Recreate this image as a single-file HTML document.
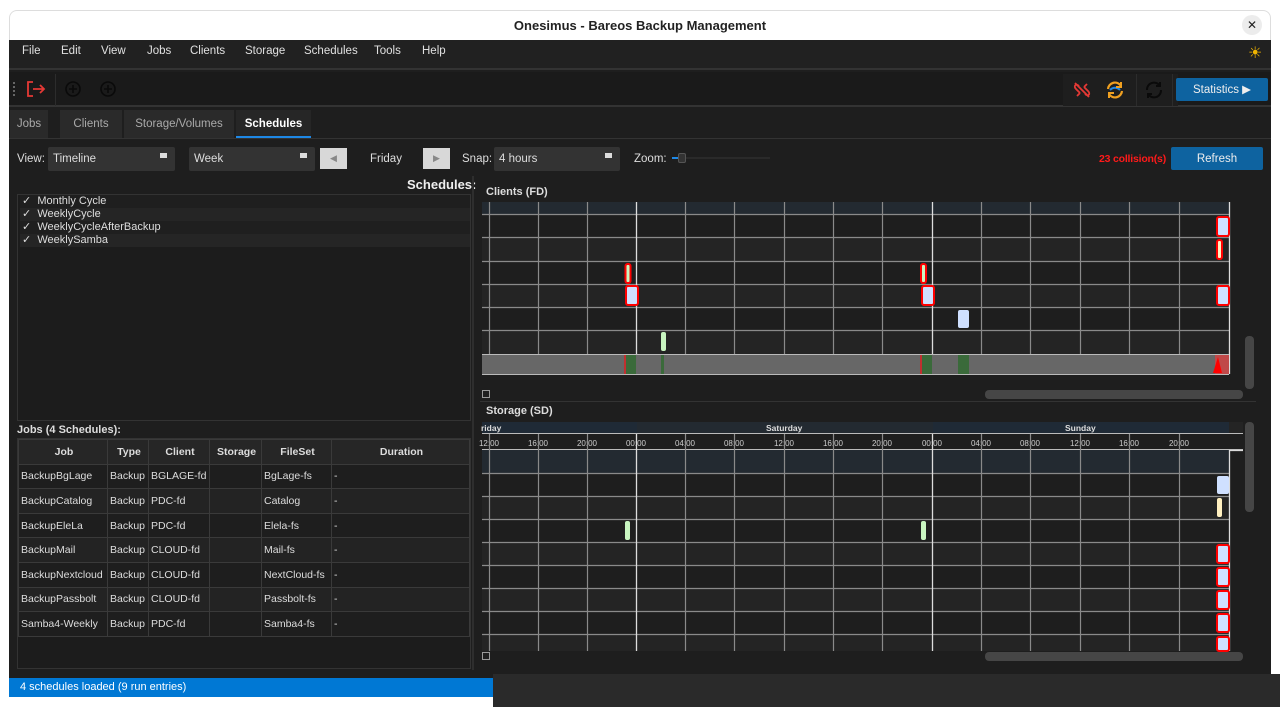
<!DOCTYPE html>
<html><head><meta charset="utf-8"><style>
*{margin:0;padding:0;box-sizing:border-box}
body{width:1280px;height:707px;background:#fff;position:relative;overflow:hidden;font-family:"Liberation Sans","DejaVu Sans",sans-serif;font-size:11px;color:#ddd}
.a{position:absolute}
.title{left:9px;top:10px;width:1262px;height:30px;background:#fff;color:#222;font-weight:bold;font-size:13px;text-align:center;line-height:30px;border-radius:8px 8px 0 0;border:1px solid #ddd;border-bottom:none}
.win{left:9px;top:40px;width:1262px;height:638px;background:#1e1e1e}
.menu{left:9px;top:40px;width:1262px;height:30px;background:#212121;border-bottom:2px solid #333}
.menu span{position:absolute;top:5px;color:#e0e0e0;font-size:11.5px}
.tb{left:9px;top:72px;width:1262px;height:35px;background:#1a1a1a;border-bottom:2px solid #333}
.tab{top:110px;height:28px;background:#2a2a2a;color:#aaa;text-align:center;line-height:29px;font-size:11.5px}
.combo{height:24px;background:#333;border-radius:2px;color:#ddd;line-height:24px;padding-left:5px;font-size:11.5px}
.combo i{position:absolute;right:8px;top:6px;width:7px;height:5px;background:#ddd}
.btn{background:#0e63a0;color:#eee;text-align:center;border-radius:2px;font-size:11.5px}
table{border-collapse:collapse;table-layout:fixed}
td,th{border:1px solid #3a3a3a;height:24.6px;padding-left:2px;text-align:left;white-space:nowrap;overflow:hidden;font-weight:normal;color:#ddd;font-size:10.5px}
th{text-align:center;font-weight:bold;background:#262626}
tr:nth-child(odd) td{background:#232323}
tr:nth-child(even) td{background:#1e1e1e}
</style></head><body>
<div class="a title">Onesimus - Bareos Backup Management</div>
<div class="a" style="left:1242px;top:15px;width:20px;height:20px;border-radius:10px;background:#ececec;color:#222;font-weight:bold;text-align:center;line-height:20px;font-size:12px">✕</div>
<div class="a win"></div>
<div class="a menu">
<span style="left:13px">File</span><span style="left:52px">Edit</span><span style="left:92px">View</span><span style="left:138px">Jobs</span><span style="left:181px">Clients</span><span style="left:236px">Storage</span><span style="left:295px">Schedules</span><span style="left:365px">Tools</span><span style="left:413px">Help</span>
<span style="left:1239px;top:3px;color:#f0b400;font-size:16px">☀</span>
</div>
<div class="a tb"></div>
<div class="a" style="left:13px;top:82px;width:3px;height:14px;border-left:2px dotted #666"></div>
<svg class="a" style="left:25px;top:79px" width="22" height="20" viewBox="0 0 22 20"><path d="M8 3H3v14h5M8 10h11M15 6l4 4-4 4" fill="none" stroke="#e53935" stroke-width="1.8"/></svg>
<div class="a" style="left:55px;top:74px;width:1px;height:32px;background:#2c2c2c"></div>
<svg class="a" style="left:64px;top:80px" width="18" height="18"><circle cx="9" cy="9" r="7" fill="none" stroke="#0a0a0a" stroke-width="1.6"/><path d="M9 5v8M5 9h8" stroke="#0a0a0a" stroke-width="1.6"/></svg>
<svg class="a" style="left:99px;top:80px" width="18" height="18"><circle cx="9" cy="9" r="7" fill="none" stroke="#0a0a0a" stroke-width="1.6"/><path d="M9 5v8M5 9h8" stroke="#0a0a0a" stroke-width="1.6"/></svg>
<div class="a" style="left:1063px;top:74px;width:115px;height:32px;background:#1e1e1e"></div>
<svg class="a" style="left:1071px;top:79px" width="22" height="22"><path d="M4 4l14 14M8 7c-3-3-6 0-3 3l4 4M14 15c3 3 6 0 3-3l-4-4M9 14l-3 3M13 8l3-3" fill="none" stroke="#e53935" stroke-width="1.8"/></svg>
<svg class="a" style="left:1104px;top:79px" width="22" height="22"><path d="M4 10a7 7 0 0 1 13-3M18 12a7 7 0 0 1-13 3" fill="none" stroke="#f0a020" stroke-width="2.2"/><path d="M6 11c3-3 7-3 10 0" fill="none" stroke="#1e88e5" stroke-width="2"/><path d="M17 3v5h-5M5 19v-5h5" fill="none" stroke="#f0a020" stroke-width="2"/></svg>
<div class="a" style="left:1136px;top:74px;width:1px;height:32px;background:#2c2c2c"></div>
<svg class="a" style="left:1143px;top:79px" width="22" height="22"><path d="M4 11a7 7 0 0 1 13-4M18 11a7 7 0 0 1-13 4M17 3v4h-4M5 19v-4h4" fill="none" stroke="#0a0a0a" stroke-width="2"/></svg>
<div class="a" style="left:1172px;top:74px;width:1px;height:32px;background:#2c2c2c"></div>
<div class="a btn" style="left:1176px;top:78px;width:92px;height:23px;line-height:24px">Statistics ▶</div>

<div class="a tab" style="left:10px;width:38px">Jobs</div>
<div class="a tab" style="left:60px;width:62px">Clients</div>
<div class="a tab" style="left:124px;width:110px">Storage/Volumes</div>
<div class="a tab" style="left:236px;width:75px;color:#fff;font-weight:bold;border-bottom:2px solid #1e88e5;background:#262626">Schedules</div>
<div class="a" style="left:9px;top:138px;width:1262px;height:1px;background:#333"></div>

<div class="a" style="left:17px;top:153px;font-size:11.5px">View:</div>
<div class="a combo" style="left:48px;top:147px;width:127px">Timeline<i></i></div>
<div class="a combo" style="left:189px;top:147px;width:126px">Week<i></i></div>
<div class="a" style="left:320px;top:148px;width:27px;height:21px;background:#d8d8d8;color:#888;text-align:center;line-height:21px;font-size:9px">◀</div>
<div class="a" style="left:370px;top:153px;font-size:11.5px">Friday</div>
<div class="a" style="left:423px;top:148px;width:27px;height:21px;background:#d8d8d8;color:#888;text-align:center;line-height:21px;font-size:9px">▶</div>
<div class="a" style="left:462px;top:153px;font-size:11.5px">Snap:</div>
<div class="a combo" style="left:494px;top:147px;width:126px">4 hours<i></i></div>
<div class="a" style="left:634px;top:153px;font-size:11.5px">Zoom:</div>
<div class="a" style="left:672px;top:157px;width:98px;height:2px;background:#2a2a2a"></div>
<div class="a" style="left:672px;top:157px;width:8px;height:2px;background:#1e88e5"></div>
<div class="a" style="left:678px;top:153px;width:8px;height:10px;background:#333;border:1px solid #555;border-radius:2px"></div>
<div class="a" style="right:114px;top:153px;color:#ff1a1a;font-weight:bold;font-size:10.5px;letter-spacing:-0.2px">23 collision(s)</div>
<div class="a btn" style="left:1171px;top:147px;width:92px;height:23px;line-height:24px">Refresh</div>

<div class="a" style="left:407px;top:177px;font-weight:bold;font-size:13px;color:#eee">Schedules:</div>
<div class="a" style="left:17px;top:194px;width:454px;height:227px;background:#1c1c1c;border:1px solid #333"></div>
<div class="a" style="left:20px;top:195px;width:450px;height:13px;background:#1f1f1f"></div>
<div class="a" style="left:20px;top:208px;width:450px;height:13px;background:#252525"></div>
<div class="a" style="left:20px;top:221px;width:450px;height:13px;background:#1f1f1f"></div>
<div class="a" style="left:20px;top:234px;width:450px;height:13px;background:#252525"></div>
<div class="a" style="left:22px;top:195px;line-height:13px;font-size:11px">✓&nbsp; Monthly Cycle<br>✓&nbsp; WeeklyCycle<br>✓&nbsp; WeeklyCycleAfterBackup<br>✓&nbsp; WeeklySamba</div>
<div class="a" style="left:17px;top:424px;font-weight:bold">Jobs (4 Schedules):</div>
<div class="a" style="left:17px;top:438px;width:454px;height:231px;background:#1c1c1c;border:1px solid #333"></div>
<table class="a" style="left:18px;top:439px;width:452px">
<colgroup><col style="width:89px"><col style="width:41px"><col style="width:61px"><col style="width:52px"><col style="width:70px"><col></colgroup>
<tr><th>Job</th><th>Type</th><th>Client</th><th>Storage</th><th>FileSet</th><th>Duration</th></tr>
<tr><td>BackupBgLage</td><td>Backup</td><td>BGLAGE-fd</td><td></td><td>BgLage-fs</td><td>-</td></tr>
<tr><td>BackupCatalog</td><td>Backup</td><td>PDC-fd</td><td></td><td>Catalog</td><td>-</td></tr>
<tr><td>BackupEleLa</td><td>Backup</td><td>PDC-fd</td><td></td><td>Elela-fs</td><td>-</td></tr>
<tr><td>BackupMail</td><td>Backup</td><td>CLOUD-fd</td><td></td><td>Mail-fs</td><td>-</td></tr>
<tr><td>BackupNextcloud</td><td>Backup</td><td>CLOUD-fd</td><td></td><td>NextCloud-fs</td><td>-</td></tr>
<tr><td>BackupPassbolt</td><td>Backup</td><td>CLOUD-fd</td><td></td><td>Passbolt-fs</td><td>-</td></tr>
<tr><td>Samba4-Weekly</td><td>Backup</td><td>PDC-fd</td><td></td><td>Samba4-fs</td><td>-</td></tr>
</table>
<div class="a" style="left:472px;top:176px;width:2px;height:494px;background:#2e2e2e"></div>

<svg class="a" style="left:0;top:0" width="1280" height="707">
<g font-family="Liberation Sans, sans-serif">
<text x="486" y="195" font-size="11" font-weight="bold" fill="#ddd">Clients (FD)</text>
<rect x="482" y="202" width="747" height="12" fill="#232a31"/>
<rect x="482" y="214" width="747" height="23" fill="#1e1e1e"/>
<rect x="482" y="237" width="747" height="24" fill="#242424"/>
<rect x="482" y="261" width="747" height="23" fill="#1e1e1e"/>
<rect x="482" y="284" width="747" height="23" fill="#242424"/>
<rect x="482" y="307" width="747" height="23" fill="#1e1e1e"/>
<rect x="482" y="330" width="747" height="24" fill="#242424"/>
<g stroke="#8a8a8a" stroke-width="1.2">
<path d="M482 214.5H1229M482 237.5H1229M482 261.5H1229M482 284.5H1229M482 307.5H1229M482 330.5H1229"/>
<path d="M489.5 202V354M538.5 202V354M587.5 202V354M685.5 202V354M734.5 202V354M784.5 202V354M833.5 202V354M882.5 202V354M981.5 202V354M1030.5 202V354M1080.5 202V354M1129.5 202V354M1179.5 202V354"/>
</g>
<path d="M636.5 202V354M932.5 202V354M1229.5 202V374" stroke="#ddd" stroke-width="1.3"/>
<rect x="482" y="355" width="747" height="19" fill="#676767"/>
<path d="M482 354.5H1229M482 374.5H1229" stroke="#bbb"/>
<rect x="624" y="355" width="2" height="19" fill="#c03030"/><rect x="626" y="355" width="10" height="19" fill="#3a6a3a"/>
<rect x="661" y="355" width="3" height="19" fill="#3a6a3a"/>
<rect x="920" y="355" width="2" height="19" fill="#c03030"/><rect x="922" y="355" width="10" height="19" fill="#3a6a3a"/>
<rect x="958" y="355" width="11" height="19" fill="#3a6a3a"/>
<rect x="1215" y="355" width="14" height="19" fill="#c04848"/>
<path d="M1213 373L1218 357L1222 373Z" fill="#f00"/>
<g stroke="#f00" stroke-width="2">
<rect x="625.5" y="264" width="5" height="19" rx="2" fill="#c8f5c0"/>
<rect x="626" y="286" width="12" height="19" rx="2" fill="#cfe0ff"/>
<rect x="921" y="264" width="5" height="19" rx="2" fill="#c8f5c0"/>
<rect x="922" y="286" width="12" height="19" rx="2" fill="#cfe0ff"/>
<rect x="1217" y="217" width="12" height="19" rx="2" fill="#cfe0ff"/>
<rect x="1217" y="240" width="5" height="19" rx="2" fill="#fff0c0"/>
<rect x="1217" y="286" width="12" height="19" rx="2" fill="#cfe0ff"/>
</g>
<rect x="661" y="332" width="5" height="19" rx="2" fill="#c8f5c0"/>
<rect x="958" y="310" width="11" height="18" rx="2" fill="#cfe0ff"/>
<rect x="482.5" y="390.5" width="7" height="7" fill="none" stroke="#999"/>
<rect x="985" y="390" width="258" height="9" rx="4" fill="#464646"/>
<rect x="1245" y="336" width="9" height="53" rx="4" fill="#464646"/>
<path d="M480 401.5H1256" stroke="#333"/>
<text x="486" y="414" font-size="11" font-weight="bold" fill="#ddd">Storage (SD)</text>
<rect x="482" y="422" width="155" height="11" fill="#1f2a36"/>
<rect x="637" y="422" width="296" height="11" fill="#232a31"/>
<rect x="933" y="422" width="296" height="11" fill="#1f2a36"/>
<rect x="1229" y="422" width="14" height="11" fill="#242424"/>
<g font-size="8.5" font-weight="bold" fill="#ddd"><text x="481" y="431">riday</text><text x="766" y="431">Saturday</text><text x="1065" y="431">Sunday</text></g>
<path d="M482 433.5H1243M482 449.5H1243" stroke="#bbb"/>
<rect x="482" y="434" width="761" height="15" fill="#1e1e1e"/>
<g font-size="8" fill="#ccc" text-anchor="middle">
<text x="489" y="446">12:00</text><text x="538" y="446">16:00</text><text x="587" y="446">20:00</text><text x="636" y="446">00:00</text><text x="685" y="446">04:00</text><text x="734" y="446">08:00</text><text x="784" y="446">12:00</text><text x="833" y="446">16:00</text><text x="882" y="446">20:00</text><text x="932" y="446">00:00</text><text x="981" y="446">04:00</text><text x="1030" y="446">08:00</text><text x="1080" y="446">12:00</text><text x="1129" y="446">16:00</text><text x="1179" y="446">20:00</text></g>
<rect x="482" y="450" width="747" height="23" fill="#232a31"/>
<rect x="482" y="473" width="747" height="23" fill="#1e1e1e"/>
<rect x="482" y="496" width="747" height="23" fill="#242424"/>
<rect x="482" y="519" width="747" height="23" fill="#1e1e1e"/>
<rect x="482" y="542" width="747" height="23" fill="#242424"/>
<rect x="482" y="565" width="747" height="23" fill="#1e1e1e"/>
<rect x="482" y="588" width="747" height="23" fill="#242424"/>
<rect x="482" y="611" width="747" height="23" fill="#1e1e1e"/>
<rect x="482" y="634" width="747" height="17" fill="#242424"/>
<g stroke="#8a8a8a" stroke-width="1.2">
<path d="M482 473.5H1229M482 496.5H1229M482 519.5H1229M482 542.5H1229M482 565.5H1229M482 588.5H1229M482 611.5H1229M482 634.5H1229"/>
<path d="M489.5 434V651M538.5 434V651M587.5 434V651M685.5 434V651M734.5 434V651M784.5 434V651M833.5 434V651M882.5 434V651M981.5 434V651M1030.5 434V651M1080.5 434V651M1129.5 434V651M1179.5 434V651"/>
</g>
<path d="M636.5 434V651M932.5 434V651M1229.5 450V651M1229 450.5H1243" stroke="#ddd" stroke-width="1.3"/>
<rect x="1217" y="476" width="12" height="18" rx="2" fill="#cfe0ff"/>
<rect x="1217" y="498" width="5" height="19" rx="2" fill="#fff0c0"/>
<rect x="625" y="521" width="5" height="19" rx="2" fill="#c8f5c0"/>
<rect x="921" y="521" width="5" height="19" rx="2" fill="#c8f5c0"/>
<g stroke="#f00" stroke-width="2" fill="#cfe0ff">
<rect x="1217" y="545" width="12" height="18" rx="2"/><rect x="1217" y="568" width="12" height="18" rx="2"/><rect x="1217" y="591" width="12" height="18" rx="2"/><rect x="1217" y="614" width="12" height="18" rx="2"/><rect x="1217" y="637" width="12" height="14" rx="2"/>
</g>
<rect x="482.5" y="652.5" width="7" height="7" fill="none" stroke="#999"/>
<rect x="985" y="652" width="258" height="9" rx="4" fill="#464646"/>
<rect x="1245" y="422" width="9" height="90" rx="4" fill="#464646"/>
</g>
</svg>

<div class="a" style="left:9px;top:678px;width:484px;height:19px;background:#0078d4;color:#fff;line-height:19px;padding-left:11px;font-size:11px">4 schedules loaded (9 run entries)</div>
<div class="a" style="left:493px;top:674px;width:787px;height:33px;background:#2a2a2a"></div>
<div class="a" style="left:1271px;top:10px;width:9px;height:664px;background:#fff"></div>
</body></html>
